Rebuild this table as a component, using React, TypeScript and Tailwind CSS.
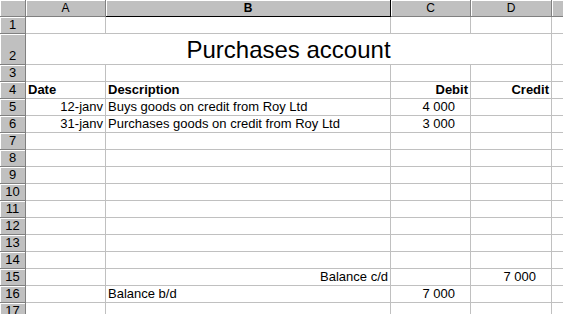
import React from 'react';

type Cell = { text?: string; align?: 'left' | 'right'; bold?: boolean; pr?: string };

const cols = ['A', 'B', 'C', 'D'];

const rows: Record<number, Cell[]> = {
  4: [
    { text: 'Date', bold: true },
    { text: 'Description', bold: true },
    { text: 'Debit', bold: true, align: 'right' },
    { text: 'Credit', bold: true, align: 'right' },
  ],
  5: [
    { text: '12-janv', align: 'right' },
    { text: 'Buys goods on credit from Roy Ltd' },
    { text: '4 000', align: 'right', pr: 'pr-[15px]' },
    {},
  ],
  6: [
    { text: '31-janv', align: 'right' },
    { text: 'Purchases goods on credit from Roy Ltd' },
    { text: '3 000', align: 'right', pr: 'pr-[15px]' },
    {},
  ],
  15: [
    {},
    { text: 'Balance c/d', align: 'right' },
    {},
    { text: '7 000', align: 'right', pr: 'pr-[15px]' },
  ],
  16: [
    {},
    { text: 'Balance b/d' },
    { text: '7 000', align: 'right', pr: 'pr-[15px]' },
    {},
  ],
};

const font = { fontFamily: '"Liberation Sans", Arial, sans-serif' };

const RowHead = ({ n, tall }: { n: number; tall?: boolean }) => (
  <div
    className={`bg-[#c0c0c0] border-r border-b border-[#808080] shadow-[inset_1px_1px_0_#ffffff] flex items-end justify-center text-[13px] leading-[15px] pb-[1px] ${
      tall ? 'h-[31px]' : 'h-[17px]'
    }`}
  >
    {n}
  </div>
);

const DataCell = ({ cell }: { cell: Cell }) => (
  <div
    className={`h-[17px] border-r border-b border-[#c0c0c0] flex items-end whitespace-nowrap text-[13px] leading-[15px] pb-[1px] ${
      cell.align === 'right' ? 'justify-end ' + (cell.pr || 'pr-[2px]') : 'justify-start pl-[2px]'
    } ${cell.bold ? 'font-bold' : ''}`}
  >
    {cell.text}
  </div>
);

export default function App() {
  const rowNums = Array.from({ length: 17 }, (_, i) => i + 1);
  return (
    <div className="w-[563px] h-[314px] overflow-hidden bg-white text-black" style={font}>
      <div className="grid grid-cols-[26px_80px_285px_80px_81px_1fr]">
        {/* column headers */}
        <div className="h-[17px] bg-[#c0c0c0] border-r border-b border-[#808080] shadow-[inset_1px_1px_0_#ffffff]" />
        {cols.map((c) => (
          <div
            key={c}
            className={`h-[17px] bg-[#c0c0c0] border-r border-b shadow-[inset_1px_1px_0_#ffffff] flex items-center justify-center text-[12px] leading-[14px] ${
              c === 'B' ? 'border-black font-bold' : 'border-[#808080]'
            }`}
          >
            {c}
          </div>
        ))}
        <div className="h-[17px] bg-[#c0c0c0] border-b border-[#808080] shadow-[inset_1px_1px_0_#ffffff]" />

        {rowNums.map((n) => {
          if (n === 2) {
            return (
              <React.Fragment key={n}>
                <RowHead n={n} tall />
                <div className="col-span-4 h-[31px] border-r border-b border-[#c0c0c0] flex items-end justify-center text-[24px] leading-[27px] pb-[1px] whitespace-nowrap">
                  Purchases account
                </div>
                <div className="h-[31px] border-b border-[#c0c0c0]" />
              </React.Fragment>
            );
          }
          const cells = rows[n] || [{}, {}, {}, {}];
          return (
            <React.Fragment key={n}>
              <RowHead n={n} />
              {cells.map((cell, i) => (
                <DataCell key={i} cell={cell} />
              ))}
              <div className="h-[17px] border-b border-[#c0c0c0]" />
            </React.Fragment>
          );
        })}
      </div>
    </div>
  );
}
